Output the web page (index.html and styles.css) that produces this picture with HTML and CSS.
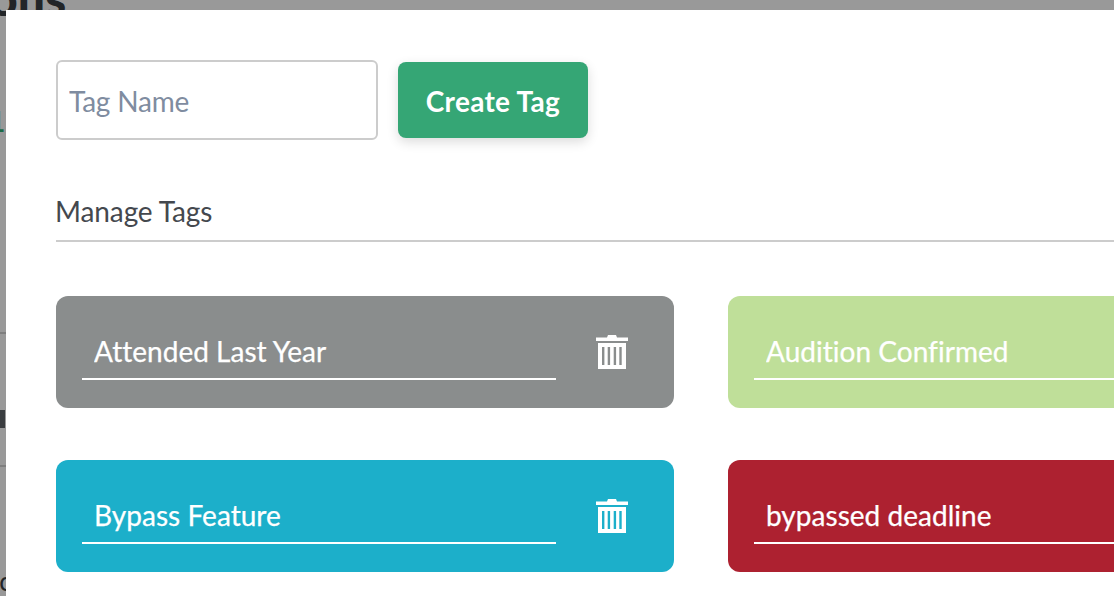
FILE: index.html
```html
<!DOCTYPE html>
<html lang="en">
<head>
<meta charset="utf-8">
<title>Manage Tags</title>
<link rel="stylesheet" href="styles.css">
</head>
<body>
<div class="backdrop">
  <h1 class="bg-title">Options</h1>
  <span class="bg-green">1</span>
  <hr class="bg-line bg-line-a">
  <span class="bg-mark"></span>
  <hr class="bg-line bg-line-b">
  <span class="bg-foot">ic</span>
</div>
<section class="modal">
  <form class="create-row">
    <input class="name-input" type="text" placeholder="Tag Name">
    <button class="create-btn" type="button">Create Tag</button>
  </form>
  <h2 class="section-title">Manage Tags</h2>
  <div class="tag-grid">
    <div class="tag tag-gray">
      <input class="tag-input" type="text" value="Attended Last Year">
      <svg class="trash" viewBox="0 0 32 34"><use href="#trash"></use></svg>
    </div>
    <div class="tag tag-green">
      <input class="tag-input" type="text" value="Audition Confirmed">
      <svg class="trash" viewBox="0 0 32 34"><use href="#trash"></use></svg>
    </div>
    <div class="tag tag-cyan">
      <input class="tag-input" type="text" value="Bypass Feature">
      <svg class="trash" viewBox="0 0 32 34"><use href="#trash"></use></svg>
    </div>
    <div class="tag tag-red">
      <input class="tag-input" type="text" value="bypassed deadline">
      <svg class="trash" viewBox="0 0 32 34"><use href="#trash"></use></svg>
    </div>
  </div>
</section>
<svg class="sprite" aria-hidden="true">
  <symbol id="trash" viewBox="0 0 32 34">
    <path fill="#fff" fill-rule="evenodd" d="M0 2.5H11L12 0H20L21 2.5H32V6H0ZM2 8H30V34H2ZM6 12V30H8.4V12ZM11.7 12V30H14.1V12ZM17.7 12V30H20.1V12ZM23.3 12V30H25.7V12Z"/>
  </symbol>
</svg>
</body>
</html>
```
FILE: styles.css
```css
* { box-sizing: border-box; }
html, body { margin: 0; height: 100%; overflow: hidden; }
body { font-family: Lato, sans-serif; background: #999; position: relative; width: 1114px; height: 596px; }
.backdrop { position: absolute; inset: 0; overflow: hidden; background: #999; }
.bg-title { position: absolute; left: -107px; top: -32px; margin: 0; font-size: 48px; font-weight: 900; line-height: 60px; color: #222528; }
.bg-green { position: absolute; left: -11px; top: 104px; font-size: 28px; font-weight: 700; color: #1d6b47; }
.bg-mark { position: absolute; left: 0; top: 410px; width: 5px; height: 18px; background: #3a3d40; }
.bg-foot { position: absolute; left: -7px; top: 565px; font-size: 26px; color: #222528; }
.bg-line { position: absolute; left: 0; width: 6px; margin: 0; border: 0; height: 2px; background: #7f7f7f; }
.bg-line-a { top: 332px; }
.bg-line-b { top: 465px; }
.sprite { position: absolute; width: 0; height: 0; }

.modal { position: absolute; left: 6px; top: 10px; width: 1400px; height: 700px; background: #fff; padding: 50px; }
.create-row { display: flex; align-items: center; gap: 20px; }
.name-input { width: 322px; height: 80px; padding: 2px 11px 0; border: 2px solid #ccc; border-radius: 6px; font: 400 28px Lato, sans-serif; letter-spacing: -.2px; color: #3d4852; outline: none; }
.name-input::placeholder { color: #7f8ca0; opacity: 1; }
.create-btn { width: 190px; height: 76px; padding: 2px 0 0; border: 0; border-radius: 8px; background: #35a675; color: #fff; font: 700 28px Lato, sans-serif; letter-spacing: .3px; box-shadow: 0 4px 12px rgba(0,0,0,.14); }
.section-title { margin: 53px 0 0; padding-bottom: 11px; border-bottom: 2px solid #ccc; font-size: 28px; line-height: 36px; font-weight: 400; letter-spacing: -.1px; text-indent: -1px; color: #44484e; }
.tag-grid { display: grid; grid-template-columns: 618px 618px; column-gap: 54px; row-gap: 52px; margin-top: 54px; }
.tag { height: 112px; border-radius: 12px; display: flex; align-items: center; padding: 0 46px 0 26px; justify-content: space-between; }
.tag-gray { background: #8a8d8d; }
.tag-green { background: #bfdf99; }
.tag-cyan { background: #1cafca; }
.tag-red { background: #ad2130; }
.tag-input { width: 474px; height: 56px; padding: 0 12px; background: transparent; border: 0; border-bottom: 2px solid #fff; font: 400 28px Lato, sans-serif; letter-spacing: .03px; -webkit-text-stroke: .25px #fff; color: #fff; outline: none; }
.trash { width: 32px; height: 34px; }
```
